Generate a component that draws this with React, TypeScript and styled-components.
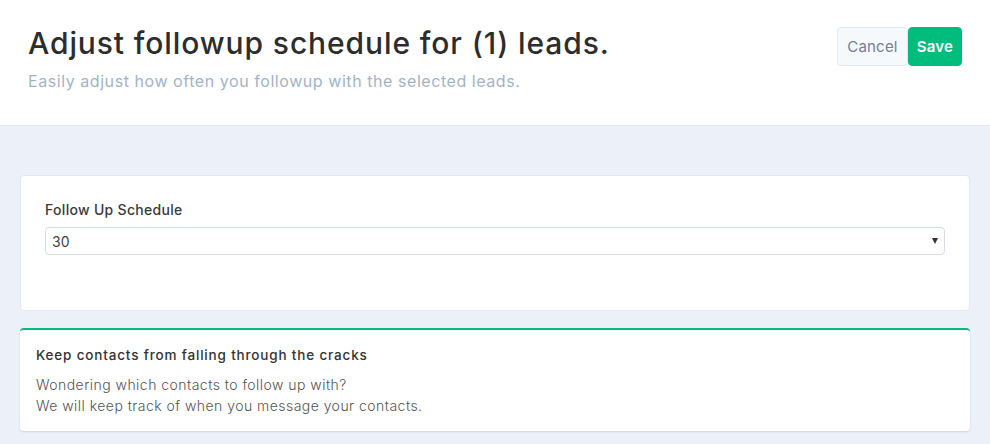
import React from 'react';
import styled, { createGlobalStyle } from 'styled-components';

const GlobalStyle = createGlobalStyle`
  body {
    margin: 0;
    background: #ecf0f8;
    font-family: Inter, "Open Sans", "Liberation Sans", sans-serif;
  }
  * { box-sizing: border-box; }
`;

export default function App() {
  return (
    <>
      <GlobalStyle />
      <Page>
        <Header>
          <div>
            <Title>Adjust followup schedule for (1) leads.</Title>
            <Subtitle>Easily adjust how often you followup with the selected leads.</Subtitle>
          </div>
          <Actions>
            <Button>Cancel</Button>
            <Button primary>Save</Button>
          </Actions>
        </Header>
        <Body>
          <Card>
            <Label>Follow Up Schedule</Label>
            <SelectBox>
              <span>30</span>
              <Caret />
            </SelectBox>
          </Card>
          <InfoCard>
            <InfoTitle>Keep contacts from falling through the cracks</InfoTitle>
            <InfoText>
              Wondering which contacts to follow up with?
              <br />
              We will keep track of when you message your contacts.
            </InfoText>
          </InfoCard>
        </Body>
      </Page>
    </>
  );
}

const Page = styled.div`
  display: flex;
  flex-direction: column;
  min-height: 444px;
`;

const Header = styled.div`
  display: flex;
  justify-content: space-between;
  align-items: flex-start;
  background: #fff;
  border-bottom: 1px solid #e2e8f0;
  height: 126px;
  padding: 24px 28px 0 28px;
`;

const Title = styled.h1`
  margin: 0;
  font-size: 30px;
  font-weight: 500;
  color: #2d2d2d;
  letter-spacing: 0.9px;
  line-height: 38px;
`;

const Subtitle = styled.p`
  margin: 9px 0 0 0;
  font-size: 16px;
  color: #a3b3c6;
  letter-spacing: 0.56px;
  line-height: 20px;
`;

const Actions = styled.div`
  display: flex;
  margin-top: 3px;
`;

const Button = styled.button<{ primary?: boolean }>`
  height: 39px;
  padding: 0 ${(p) => (p.primary ? 8 : 9)}px;
  font-family: inherit;
  font-size: 15px;
  letter-spacing: 0.2px;
  font-weight: ${(p) => (p.primary ? 600 : 400)};
  border-radius: 4px;
  border: 1px solid ${(p) => (p.primary ? '#00bd7e' : '#e2e8f0')};
  background: ${(p) => (p.primary ? '#00bd7e' : '#f6f9fc')};
  color: ${(p) => (p.primary ? '#fff' : '#718096')};
  cursor: pointer;
`;

const Body = styled.div`
  display: flex;
  flex-direction: column;
  gap: 17px;
  padding: 49px 20px 12px 20px;
`;

const Card = styled.div`
  background: #fff;
  border: 1px solid #e2e8f0;
  border-radius: 4px;
  padding: 25px 24px 55px 24px;
`;

const Label = styled.div`
  font-size: 14px;
  font-weight: 500;
  color: #3a3a3a;
  letter-spacing: 0.3px;
  line-height: 17px;
  margin-bottom: 9px;
`;

const SelectBox = styled.div`
  display: flex;
  align-items: center;
  justify-content: space-between;
  height: 28px;
  border: 1px solid #d5dde8;
  border-radius: 4px;
  padding: 0 6px 0 6px;
  font-size: 14px;
  color: #444;
`;

const Caret = styled.span`
  width: 0;
  height: 0;
  border-left: 3.5px solid transparent;
  border-right: 3.5px solid transparent;
  border-top: 6px solid #333;
`;

const InfoCard = styled.div`
  background: #fff;
  border-top: 2px solid #00bd7e;
  border-radius: 4px;
  box-shadow: 0 1px 2px rgba(0, 0, 0, 0.12);
  padding: 17px 16px 15px 16px;
`;

const InfoTitle = styled.div`
  font-size: 13.5px;
  font-weight: 500;
  color: #333;
  letter-spacing: 0.83px;
  line-height: 17px;
  margin-bottom: 10px;
`;

const InfoText = styled.div`
  font-size: 14px;
  font-weight: 300;
  color: #555;
  letter-spacing: 0.46px;
  line-height: 21px;
`;
